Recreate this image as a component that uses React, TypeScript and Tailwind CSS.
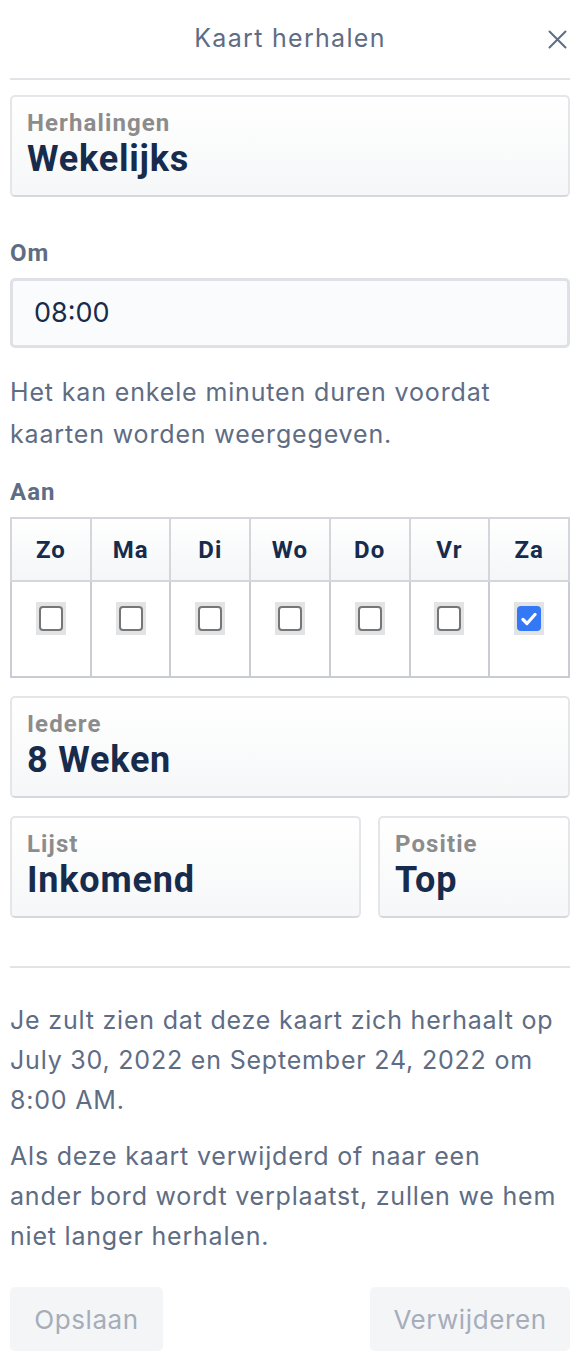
import React from "react";

const inter = { fontFamily: "Inter, 'Liberation Sans', sans-serif" };
const roboto = { fontFamily: "Roboto, 'Liberation Sans', sans-serif" };

function SelectCard({ label, value, className = "" }: { label: string; value: string; className?: string }) {
  return (
    <div
      className={`h-[102px] rounded-[5px] border-2 border-[#e4e6ea] border-b-[#d5d8dd] bg-gradient-to-b from-white to-[#f6f7f8] pl-[15px] pt-[12px] ${className}`}
      style={roboto}
    >
      <div className="text-[24px] leading-[28px] font-bold tracking-[1.1px] text-[#8c8c8c]">{label}</div>
      <div className="mt-[2px] text-[36px] leading-[40px] font-bold tracking-[0.8px] text-[#172b4d]">{value}</div>
    </div>
  );
}

function Check({ checked }: { checked?: boolean }) {
  return (
    <div className="w-[30px] h-[33px] bg-[#e2e3e5] flex items-center justify-center">
      {checked ? (
        <div className="w-[24px] h-[25px] rounded-[4px] bg-[#3478f6] flex items-center justify-center">
          <svg width="16" height="14" viewBox="0 0 16 14">
            <path d="M2 7.5 L6 11.5 L14 2.5" fill="none" stroke="white" strokeWidth="3.2" strokeLinecap="round" strokeLinejoin="round" />
          </svg>
        </div>
      ) : (
        <div className="w-[24px] h-[25px] rounded-[4px] border-2 border-[#767676] bg-white" />
      )}
    </div>
  );
}

function Lines({ lines, className }: { lines: string[]; className: string }) {
  return (
    <p className={className}>
      {lines.map((l) => (
        <span key={l} className="block whitespace-nowrap">
          {l}
        </span>
      ))}
    </p>
  );
}

export default function App() {
  const days = ["Zo", "Ma", "Di", "Wo", "Do", "Vr", "Za"];
  return (
    <div className="w-[580px] min-h-[1366px] bg-white px-[10px]" style={inter}>
      <div className="h-[78px] grid grid-cols-[40px_1fr_40px] items-center">
        <div />
        <div className="text-center text-[25px] tracking-[1.3px] text-[#5e6c84]">Kaart herhalen</div>
        <div className="flex justify-end pr-[3px]">
          <svg width="19" height="19" viewBox="0 0 19 19">
            <path d="M1.5 1.5 L17.5 17.5 M17.5 1.5 L1.5 17.5" stroke="#5e6c84" strokeWidth="2" strokeLinecap="round" />
          </svg>
        </div>
      </div>
      <div className="h-[2px] bg-[#e1e3e7]" />

      <SelectCard label="Herhalingen" value="Wekelijks" className="mt-[15px]" />

      <div className="mt-[42px] text-[24px] leading-[28px] font-bold tracking-[1px] text-[#5e6c84]" style={roboto}>Om</div>
      <div className="mt-[11px] h-[70px] rounded-[5px] border-[3px] border-[#dfe1e6] bg-[#fafbfc] flex items-center pl-[21px] text-[27px] text-[#172b4d]">
        08:00
      </div>

      <Lines
        className="mt-[23px] text-[25px] leading-[42px] tracking-[0.85px] text-[#5e6c84]"
        lines={["Het kan enkele minuten duren voordat", "kaarten worden weergegeven."]}
      />

      <div className="mt-[23px] text-[24px] leading-[28px] font-bold tracking-[1px] text-[#5e6c84]" style={roboto}>Aan</div>

      <table className="mt-[11px] w-full table-fixed border-collapse border-2 border-[#c9ccd2]">
        <thead>
          <tr className="h-[63px] bg-gradient-to-b from-white to-[#f4f6f7]">
            {days.map((d) => (
              <th key={d} className="border-2 border-[#d4d6db] text-[24px] font-bold tracking-[1px] text-[#172b4d]" style={roboto}>
                {d}
              </th>
            ))}
          </tr>
        </thead>
        <tbody>
          <tr className="h-[96px]">
            {days.map((d, i) => (
              <td key={d} className="border-2 border-[#c9ccd2] align-top pt-[20px]">
                <div className="flex justify-center">
                  <Check checked={i === 6} />
                </div>
              </td>
            ))}
          </tr>
        </tbody>
      </table>

      <SelectCard label="Iedere" value="8 Weken" className="mt-[18px]" />

      <div className="mt-[18px] flex gap-[17px]">
        <SelectCard label="Lijst" value="Inkomend" className="flex-1" />
        <SelectCard label="Positie" value="Top" className="w-[192px]" />
      </div>

      <div className="mt-[48px] h-[2px] bg-[#e1e3e7]" />

      <Lines
        className="mt-[32px] text-[25px] leading-[40px] tracking-[0.8px] text-[#5e6c84]"
        lines={["Je zult zien dat deze kaart zich herhaalt op", "July 30, 2022 en September 24, 2022 om", "8:00 AM."]}
      />
      <Lines
        className="mt-[16px] text-[25px] leading-[40px] tracking-[0.8px] text-[#5e6c84]"
        lines={["Als deze kaart verwijderd of naar een", "ander bord wordt verplaatst, zullen we hem", "niet langer herhalen."]}
      />

      <div className="mt-[31px] flex justify-between">
        <button className="h-[64px] w-[153px] rounded-[5px] bg-[#f4f5f7] text-[26px] tracking-[0.6px] text-[#a5adba]">Opslaan</button>
        <button className="h-[64px] w-[200px] rounded-[5px] bg-[#f4f5f7] text-[26px] tracking-[0.6px] text-[#a5adba]">Verwijderen</button>
      </div>
    </div>
  );
}
